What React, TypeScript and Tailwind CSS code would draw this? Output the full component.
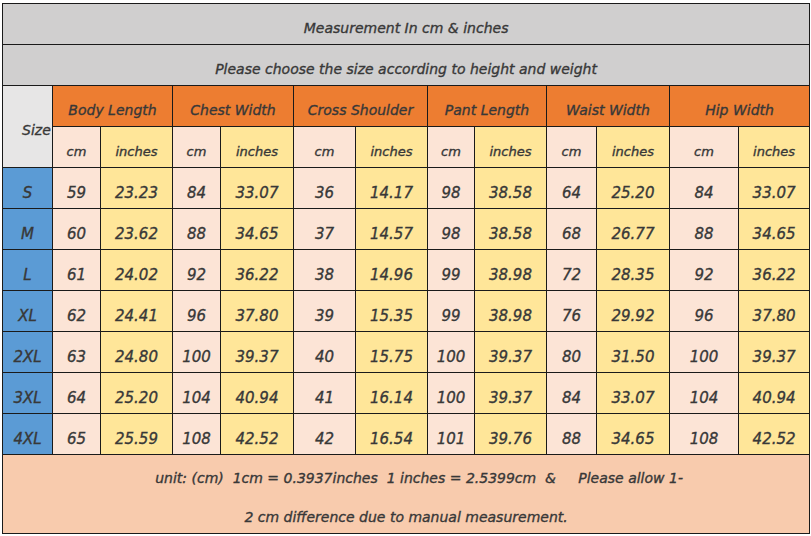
import React from 'react';

const rows = [
  ['S', '59', '23.23', '84', '33.07', '36', '14.17', '98', '38.58', '64', '25.20', '84', '33.07'],
  ['M', '60', '23.62', '88', '34.65', '37', '14.57', '98', '38.58', '68', '26.77', '88', '34.65'],
  ['L', '61', '24.02', '92', '36.22', '38', '14.96', '99', '38.98', '72', '28.35', '92', '36.22'],
  ['XL', '62', '24.41', '96', '37.80', '39', '15.35', '99', '38.98', '76', '29.92', '96', '37.80'],
  ['2XL', '63', '24.80', '100', '39.37', '40', '15.75', '100', '39.37', '80', '31.50', '100', '39.37'],
  ['3XL', '64', '25.20', '104', '40.94', '41', '16.14', '100', '39.37', '84', '33.07', '104', '40.94'],
  ['4XL', '65', '25.59', '108', '42.52', '42', '16.54', '101', '39.76', '88', '34.65', '108', '42.52'],
];

const groups = ['Body Length', 'Chest Width', 'Cross Shoulder', 'Pant Length', 'Waist Width', 'Hip Width'];
const widths = [50, 48, 72, 48, 73, 62, 72, 47, 72, 50, 73, 69, 71];

const cell = 'border border-[#1a1a1a] text-center align-middle p-0 pt-[7px]';

export default function App() {
  return (
    <div className="w-[811px] h-[536px] bg-white pl-[2px] pt-[3px]">
      <table
        className="border-collapse table-fixed w-[807px] italic text-[#383838] text-[14px] [-webkit-text-stroke:0.35px_#383838]"
        style={{ fontFamily: '"DejaVu Sans", "Liberation Sans", sans-serif' }}
      >
        <colgroup>
          {widths.map((w, i) => (
            <col key={i} style={{ width: w }} />
          ))}
        </colgroup>
        <tbody>
          {/* TITLE */}
          <tr className="h-[41px] bg-[#d0cfcf]">
            <td colSpan={13} className={cell + ' pt-[9px]'}>
              Measurement In cm &amp; inches
            </td>
          </tr>
          <tr className="h-[41px] bg-[#d0cfcf]">
            <td colSpan={13} className={cell + ' pt-[8px]'}>
              Please choose the size according to height and weight
            </td>
          </tr>

          {/* HEADERS */}
          <tr className="h-[41px] text-[14px]">
            <td rowSpan={2} className={cell + ' bg-[#e7e6e6] text-left pl-[19px] pt-[8px]'}>
              Size
            </td>
            {groups.map((g) => (
              <td key={g} colSpan={2} className={cell + ' bg-[#ed7d31] pt-[8px]'}>
                {g}
              </td>
            ))}
          </tr>
          <tr className="h-[41px] text-[13px]">
            {groups.map((g) => (
              <React.Fragment key={g}>
                <td className={cell + ' bg-[#fce4d6] pt-[10px]'}>cm</td>
                <td className={cell + ' bg-[#ffe699] pt-[10px]'}>inches</td>
              </React.Fragment>
            ))}
          </tr>

          {/* DATA */}
          {rows.map((r) => (
            <tr key={r[0]} className="h-[41px] text-[15px]">
              {r.map((v, i) => (
                <td
                  key={i}
                  className={
                    cell +
                    ' pt-[10px]' +
                    (i === 0 ? ' bg-[#5b9bd5]' : i % 2 === 1 ? ' bg-[#fce4d6]' : ' bg-[#ffe699]')
                  }
                >
                  {v}
                </td>
              ))}
            </tr>
          ))}

          {/* FOOTER */}
          <tr className="h-[79px] bg-[#f8cbad]">
            <td colSpan={13} className={cell + ' text-[14px] pt-[3px]'}>
              <div className="flex flex-col items-center gap-[18px]">
                <span className="whitespace-pre ml-[26px]">
                  {'unit: (cm)  1cm = 0.3937inches  1 inches = 2.5399cm  &     Please allow 1-'}
                </span>
                <span className="whitespace-pre">2 cm difference due to manual measurement.</span>
              </div>
            </td>
          </tr>
        </tbody>
      </table>
    </div>
  );
}
